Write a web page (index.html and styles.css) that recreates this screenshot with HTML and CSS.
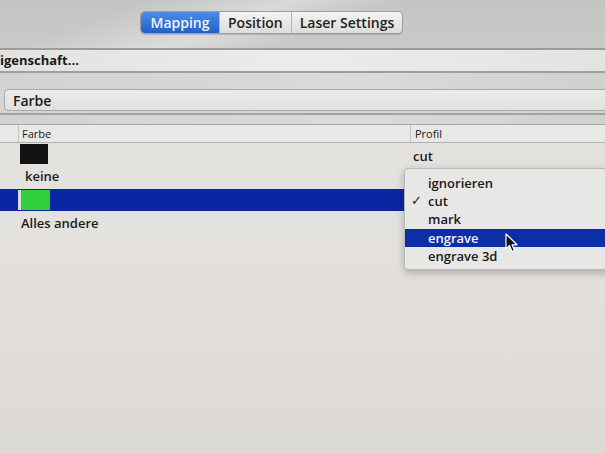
FILE: index.html
```html
<!DOCTYPE html>
<html lang="de">
<head>
  <meta charset="UTF-8">
  <title>Mapping</title>
  <link rel="stylesheet" href="styles.css">
</head>
<body>
  <div class="window">
    <div class="toolbar">
      <div class="tabs">
        <span class="tab active">Mapping</span>
        <span class="tab">Position</span>
        <span class="tab">Laser Settings</span>
      </div>
    </div>
    <div class="prop">igenschaft...</div>
    <div class="band"></div>
    <div class="field-wrap">
      <div class="field">Farbe</div>
    </div>
    <div class="band small"></div>

    <div class="table">
      <div class="thead">
        <div class="col-color">Farbe</div>
        <div class="col-profile">Profil</div>
      </div>
      <div class="trow">
        <div class="col-color"><span class="swatch black"></span></div>
        <div class="col-profile value">cut</div>
      </div>
      <div class="label">keine</div>
      <div class="trow selected">
        <div class="col-color"><span class="swatch green"></span></div>
        <div class="col-profile"></div>
      </div>
      <div class="label other">Alles andere</div>
    </div>

    <ul class="menu">
      <li>ignorieren</li>
      <li class="checked">cut</li>
      <li>mark</li>
      <li class="hover">engrave</li>
      <li>engrave 3d</li>
    </ul>

    <svg class="cursor" width="14" height="21" viewBox="0 0 14 21">
      <path d="M1 1 L1 16 L4.5 12.5 L7 18.5 L9.5 17.5 L7 11.8 L12 11.8 Z" fill="#111" stroke="#fff" stroke-width="1.2" stroke-linejoin="round"/>
    </svg>
  </div>
</body>
</html>
```

FILE: styles.css
```css
* {
  box-sizing: border-box;
}
html, body {
  margin: 0;
  height: 100%;
}
body {
  font-family: "Open Sans", "DejaVu Sans", sans-serif;
  font-size: 13px;
  font-weight: 600;
  color: #1a1a1a;
  background: #e3e0dc;
  overflow: hidden;
}
.window {
  position: relative;
  height: 454px;
  background: linear-gradient(180deg, #e2e0dc 0%, #e5e2de 50%, #dcdad6 100%);
}
.toolbar {
  height: 50px;
  padding: 11px 0 0 140px;
  background:
    linear-gradient(160deg, rgba(255,255,255,0) 20%, rgba(255,255,255,0.35) 40%, rgba(255,255,255,0) 55%),
    linear-gradient(180deg, #c4c4c2, #c9c9c7);
  border-bottom: 2px solid #9c9c9a;
}
.tabs {
  display: inline-flex;
  height: 23px;
  border: 1px solid #9d9d9b;
  border-radius: 5px;
  background: linear-gradient(#f4f4f2, #dcdcda);
  overflow: hidden;
  box-shadow: 0 1px 1px rgba(0,0,0,0.15);
}
.tab {
  display: flex;
  align-items: center;
  padding: 0 8px;
  font-size: 14px;
  color: #222;
  border-left: 1px solid #b5b5b3;
}
.tab:first-child {
  border-left: none;
}
.tab.active {
  width: 78px;
  justify-content: center;
  color: #f0f4ff;
  background: linear-gradient(#4f8be6, #2060cc);
}
.prop {
  height: 23px;
  line-height: 21px;
  padding-left: 0;
  font-weight: 700;
  font-size: 13px;
  background: linear-gradient(90deg, #e3e2df, #ececea 50%, #e3e3e1);
  border-bottom: 2px solid #9e9e9c;
}
.band {
  height: 16px;
  background: linear-gradient(90deg, #d2d2d0, #dadad8 60%, #d0d0ce);
}
.band.small {
  height: 12px;
  border-top: 2px solid #a2a2a0;
  border-bottom: 1px solid #a8a8a6;
}
.field-wrap {
  padding: 0 0 2px 4px;
  background: #d4d4d2;
}
.field {
  height: 22px;
  line-height: 21px;
  padding-left: 8px;
  font-size: 14px;
  border: 1px solid #a9a9a7;
  border-right: none;
  border-radius: 5px 0 0 5px;
  background: linear-gradient(#ebebe9, #e0e0de);
}
.table {
  background: #e3e2df;
}
.thead {
  display: flex;
  height: 18px;
  line-height: 17px;
  font-size: 11px;
  font-weight: 500;
  background: #e8e8e6;
  border-bottom: 1px solid #b0b0ae;
}
.thead .col-color {
  width: 392px;
  margin-left: 18px;
  padding-left: 3px;
  border-left: 1px solid #c3c3c1;
}
.thead .col-profile {
  padding-left: 4px;
  border-left: 1px solid #c3c3c1;
}
.trow {
  display: flex;
  height: 22px;
}
.trow .col-color {
  width: 410px;
  padding: 1px 0 0 20px;
}
.trow .value {
  padding-top: 4px;
  padding-left: 3px;
}
.swatch {
  display: block;
  width: 28px;
  height: 20px;
}
.swatch.black {
  background: #111;
}
.label {
  height: 24px;
  padding: 2px 0 0 25px;
}
.label.other {
  padding: 3px 0 0 21px;
}
.trow.selected {
  background: #0a26a2;
}
.trow.selected .col-color {
  padding: 1px 0 1px 18px;
}
.swatch.green {
  height: 20px;
  border-left: 3px solid #d8dce8;
  width: 32px;
  background: #2fcf3c;
}
.menu {
  position: absolute;
  top: 168px;
  left: 404px;
  width: 210px;
  margin: 0;
  padding: 5px 0 4px;
  list-style: none;
  font-size: 13px;
  background: #e7e7e5;
  border: 1px solid #b8b8b6;
  border-radius: 4px 0 0 4px;
  box-shadow: 0 3px 8px rgba(0,0,0,0.25);
}
.menu li {
  position: relative;
  height: 18.2px;
  line-height: 18px;
  padding-left: 23px;
}
.menu li.checked::before {
  content: "✓";
  position: absolute;
  left: 6px;
  font-family: "DejaVu Sans", sans-serif;
  font-weight: 700;
}
.menu li.hover {
  color: #f2f4ff;
  background: #0c2fa6;
}
.cursor {
  position: absolute;
  left: 505px;
  top: 233px;
}
```
